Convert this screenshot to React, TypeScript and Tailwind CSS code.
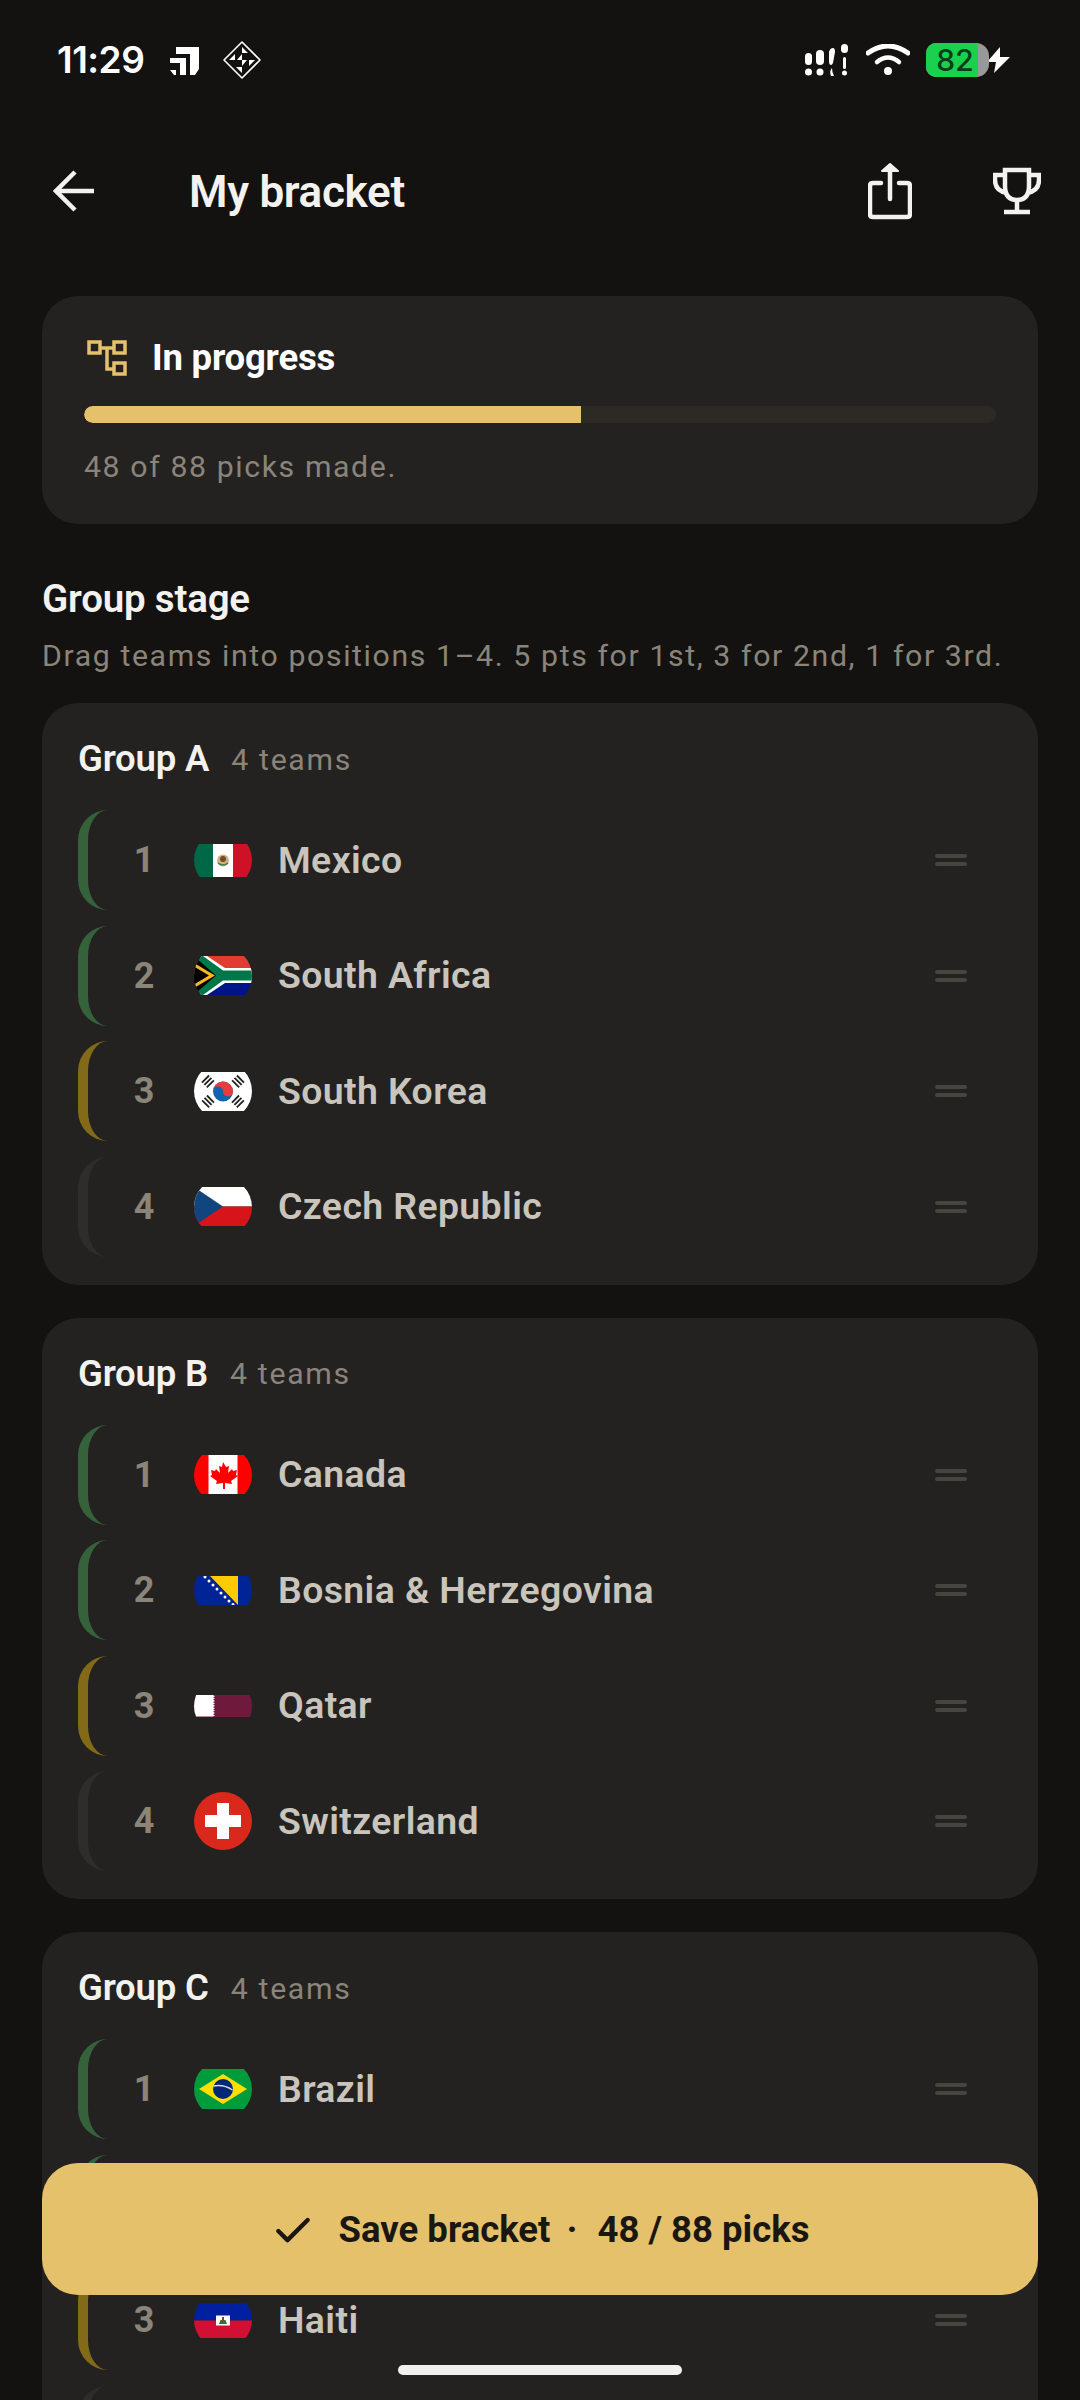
import React from 'react';
import { Check } from 'lucide-react';

type Team = { name: string; flag: React.ReactNode };
type Group = { letter: string; teams: Team[] };

// flags are drawn in a 58x58 box and cut by the round wrapper
const Band = ({ h, children }: { h: number; children: React.ReactNode }) => (
  <svg width="58" height={h} viewBox={`0 0 58 ${h}`} className="block">
    {children}
  </svg>
);

const Mexico = () => (
  <Band h={33}>
    <rect width="20" height="33" fill="#006847" />
    <rect x="19" width="20" height="33" fill="#ffffff" />
    <rect x="39" width="19" height="33" fill="#ce1126" />
    <circle cx="29" cy="16.5" r="6" fill="#c9b48a" />
    <circle cx="29" cy="15" r="3" fill="#7a4a21" />
    <path d="M24 19q5 4 10 0" stroke="#3f7f4e" strokeWidth="1.4" fill="none" />
  </Band>
);

const SouthAfrica = () => (
  <Band h={39}>
    <rect width="58" height="19.5" fill="#e03c31" />
    <rect y="19.5" width="58" height="19.5" fill="#001489" />
    <path d="M0 0L29 19.5L0 39Z" fill="#000" />
    <path d="M3 0H13L31 12H58V27H31L13 39H3L30 19.5Z" fill="#fff" />
    <path d="M3 0H9L29 14.5H58V24.5H29L9 39H3L2 37L22 19.5L2 2Z" fill="#007749" />
    <path d="M0 7L21 19.5L0 32V28.5L15 19.5L0 10.5Z" fill="#ffb81c" />
  </Band>
);

const Trigram = ({ x, y, r }: { x: number; y: number; r: number }) => (
  <g transform={`translate(${x} ${y}) rotate(${r})`} fill="#222">
    <rect x="-5" y="-4.4" width="10" height="1.8" />
    <rect x="-5" y="-1" width="10" height="1.8" />
    <rect x="-5" y="2.4" width="10" height="1.8" />
  </g>
);

const Korea = () => (
  <Band h={39}>
    <rect width="58" height="39" fill="#fff" />
    <Trigram x={14} y={9.5} r={-45} />
    <Trigram x={44} y={9.5} r={45} />
    <Trigram x={14} y={29.5} r={45} />
    <Trigram x={44} y={29.5} r={-45} />
    <circle cx="29" cy="19.5" r="10" fill="#0f64b0" />
    <path d="M19 19.5a10 10 0 0 1 20 0a5 5 0 0 1-10 0a5 5 0 0 0-10 0Z" fill="#e83b3b" />
  </Band>
);

const Czech = () => (
  <Band h={39}>
    <rect width="58" height="19.5" fill="#fff" />
    <rect y="19.5" width="58" height="19.5" fill="#d7141a" />
    <path d="M0 0L29 19.5L0 39Z" fill="#11457e" />
  </Band>
);

const Canada = () => (
  <Band h={39}>
    <rect width="58" height="39" fill="#ff0000" />
    <rect x="14.5" width="29" height="39" fill="#fff" />
    <path d="M29 7l3 5 3-1-1 7 4-4 1 2 4-1-1 5 2 1-7 5 1 3-7-1v6h-2v-6l-7 1 1-3-7-5 2-1-1-5 4 1 1-2 4 4-1-7 3 1Z" fill="#ff0000" />
  </Band>
);

const Bosnia = () => (
  <Band h={29}>
    <rect width="58" height="29" fill="#002395" />
    <path d="M16 0H44V29Z" fill="#fecb00" />
    <g fill="#fff">
      <circle cx="11" cy="1" r="1.5" />
      <circle cx="15" cy="5" r="1.5" />
      <circle cx="19" cy="9" r="1.5" />
      <circle cx="23" cy="13" r="1.5" />
      <circle cx="27" cy="17" r="1.5" />
      <circle cx="31" cy="21" r="1.5" />
      <circle cx="35" cy="25" r="1.5" />
      <circle cx="39" cy="28.5" r="1.5" />
    </g>
  </Band>
);

const Qatar = () => (
  <Band h={22}>
    <rect width="58" height="22" fill="#6f1a3d" />
    <path d="M0 0H19l2 1.2-2 1.2 2 1.2-2 1.2 2 1.2-2 1.2 2 1.2-2 1.2 2 1.2-2 1.2 2 1.2-2 1.2 2 1.2-2 1.2 2 1.2-2 1.2 2 1.2-2 1.2H0Z" fill="#fff" />
  </Band>
);

const Swiss = () => (
  <Band h={58}>
    <rect width="58" height="58" fill="#da291c" />
    <path d="M23 11H35V23H47V35H35V47H23V35H11V23H23Z" fill="#fff" />
  </Band>
);

const Brazil = () => (
  <Band h={40}>
    <rect width="58" height="40" fill="#009c3b" />
    <path d="M29 5L53 20L29 35L5 20Z" fill="#ffdf00" />
    <circle cx="29" cy="20" r="10" fill="#002776" />
    <path d="M19.5 17q10-2 19 4" stroke="#d8dde0" strokeWidth="1.4" fill="none" />
  </Band>
);

const Morocco = () => (
  <Band h={39}>
    <rect width="58" height="39" fill="#c1272d" />
  </Band>
);

const Haiti = () => (
  <Band h={35}>
    <rect width="58" height="17.5" fill="#00209f" />
    <rect y="17.5" width="58" height="17.5" fill="#d21034" />
    <rect x="22" y="12.5" width="14" height="10" fill="#fff" />
    <path d="M25 21h8l-1.500-4h-5Z" fill="#3f6b3a" />
    <rect x="28" y="14" width="2" height="4" fill="#7a4a21" />
  </Band>
);

const Scotland = () => (
  <Band h={35}>
    <rect width="58" height="35" fill="#005eb8" />
  </Band>
);

const groups: Group[] = [
  {
    letter: 'A',
    teams: [
      { name: 'Mexico', flag: <Mexico /> },
      { name: 'South Africa', flag: <SouthAfrica /> },
      { name: 'South Korea', flag: <Korea /> },
      { name: 'Czech Republic', flag: <Czech /> },
    ],
  },
  {
    letter: 'B',
    teams: [
      { name: 'Canada', flag: <Canada /> },
      { name: 'Bosnia & Herzegovina', flag: <Bosnia /> },
      { name: 'Qatar', flag: <Qatar /> },
      { name: 'Switzerland', flag: <Swiss /> },
    ],
  },
  {
    letter: 'C',
    teams: [
      { name: 'Brazil', flag: <Brazil /> },
      { name: 'Morocco', flag: <Morocco /> },
      { name: 'Haiti', flag: <Haiti /> },
      { name: 'Scotland', flag: <Scotland /> },
    ],
  },
];

const barColors = ['border-[#35623a]', 'border-[#35623a]', 'border-[#836a18]', 'border-[#2e2d2b]'];

const TeamRow = ({ team, pos }: { team: Team; pos: number }) => (
  <div className={`flex h-[100px] items-center rounded-[30px] border-l-[10px] ${barColors[pos]}`}>
    <span className="w-[106px] pl-[6px] text-center text-[36px] font-bold text-[#8b8479]">{pos + 1}</span>
    <span className="flex h-[58px] w-[58px] shrink-0 items-center justify-center overflow-hidden rounded-full">
      {team.flag}
    </span>
    <span className="ml-[26px] flex-1 text-[37.4px] font-semibold tracking-[0.4px] text-[#c9c5bd]">{team.name}</span>
    <span className="mr-[69px] flex flex-col gap-[4px]">
      <span className="h-[4px] w-[32px] rounded-full bg-[#47453f]" />
      <span className="h-[4px] w-[32px] rounded-full bg-[#47453f]" />
    </span>
  </div>
);

const GroupCard = ({ group }: { group: Group }) => (
  <section className="rounded-[36px] bg-[#232221] pb-[28px] pl-[36px] pr-[2px] pt-[33px]">
    <div className="mb-[27px] flex h-[47px] items-center">
      <h3 className="text-[36.5px] font-semibold tracking-[-0.2px] text-[#f3f2ee]">Group {group.letter}</h3>
      <span className="ml-[22px] text-[30.25px] tracking-[1.7px] text-[#8b8479]">4 teams</span>
    </div>
    <div className="flex flex-col gap-[15.5px]">
      {group.teams.map((t, i) => (
        <TeamRow key={t.name} team={t} pos={i} />
      ))}
    </div>
  </section>
);

const StatusBar = () => (
  <div className="flex h-[118px] items-center pl-[57px] pr-[69px] pt-[1px]">
    <span className="font-[family-name:Inter,sans-serif] text-[37px] font-semibold tracking-[-0.5px] text-white">11:29</span>
    <svg width="30" height="30" viewBox="0 0 30 30" className="ml-[26px]" fill="#fff">
      <path d="M6 2H29V24L25 30H20V9H6Z" />
      <path d="M0 13H16V30H10V18H0Z" />
      <path d="M0 25H6V30H4Z" />
    </svg>
    <svg width="38" height="38" viewBox="0 0 38 38" className="ml-[23px]" fill="none" stroke="#fff" strokeWidth="1.6">
      <path d="M19 1L37 19L19 37L1 19Z" strokeLinejoin="round" />
      <path d="M19 6L25 12H19ZM19 32L13 26H19ZM6 19L12 13V19ZM32 19L26 25V19ZM19 13L14 19H19ZM19 25L24 19H19Z" fill="#fff" stroke="none" />
    </svg>
    <div className="flex-1" />
    <svg width="44" height="32" viewBox="0 0 44 32" fill="#fff">
      <rect x="0" y="9" width="7" height="12" rx="3.5" />
      <circle cx="3.5" cy="28" r="3.5" />
      <rect x="11" y="6" width="8" height="15" rx="4" />
      <circle cx="15" cy="28" r="3.5" />
      <path d="M24 8q1-4 4-4q2 0 2 4l-2 11q-1 2-2 2q-2 0-2-4Z" />
      <path d="M27 24q-3 3-1 8h3q-2-4-2-8Z" />
      <rect x="36" y="0" width="7" height="9" rx="3.5" />
      <rect x="38" y="13" width="3" height="12" rx="1.5" />
      <circle cx="39.5" cy="29" r="2.5" />
    </svg>
    <svg width="44" height="32" viewBox="0 0 44 32" className="ml-[17px]" fill="none" stroke="#fff" strokeLinecap="round">
      <path d="M2 9Q22-5 42 9" strokeWidth="5" />
      <path d="M11 18Q22 9 33 18" strokeWidth="4.500" />
      <circle cx="22" cy="27" r="4" fill="#fff" stroke="none" />
    </svg>
    <div className="relative ml-[16px] h-[34px] w-[63px] overflow-hidden rounded-l-[10px] rounded-r-[13px] bg-[#999999]">
      <div className="flex h-full w-[52px] items-center justify-center bg-[#19d14d] pl-[6px] font-[family-name:Inter,sans-serif] text-[30px] font-medium leading-none text-[#0a3d1c]">
        82
      </div>
    </div>
    <svg width="24" height="26" viewBox="0 0 24 26" className="-ml-[2px]" fill="#fff">
      <path d="M13 0L0 15H9L7 26L23 10H13Z" />
    </svg>
  </div>
);

const Header = () => (
  <div className="flex h-[146px] items-center pl-[53px] pr-[39px]">
    <svg width="42" height="42" viewBox="0 0 42 42" fill="none" stroke="#f3f2ee" strokeWidth="4.5">
      <path d="M41 21H3M22 2L3 21L22 40" />
    </svg>
    <h1 className="ml-[94px] flex-1 pt-[2px] text-[44px] font-semibold tracking-[-0.3px] text-[#f3f2ee]">My bracket</h1>
    <svg width="44" height="58" viewBox="0 0 44 58" fill="none" stroke="#f3f2ee" strokeWidth="4.5" strokeLinejoin="round" strokeLinecap="round">
      <path d="M13 21H5Q2 21 2 24V52Q2 55 5 55H39Q42 55 42 52V24Q42 21 39 21H31" />
      <path d="M22 37V4" />
      <path d="M14 9L22 2L30 9Z" fill="#f3f2ee" strokeWidth="2" />
    </svg>
    <svg width="48" height="48" viewBox="0 0 48 48" fill="none" stroke="#f3f2ee" strokeWidth="4.5" className="ml-[81px]">
      <path d="M12 3H36V19Q36 33 24 33Q12 33 12 19Z" />
      <path d="M12 8H2V13Q2 24 14 26M36 8H46V13Q46 24 34 26" />
      <path d="M24 33V45M11 45H37" />
    </svg>
  </div>
);

const ProgressCard = () => (
  <section className="mx-[42px] mt-[32px] h-[228px] rounded-[36px] bg-[#232221] px-[42px] pt-[41px]">
    <div className="flex h-[42px] items-center">
      <svg width="40" height="36" viewBox="0 0 40 36" fill="none" stroke="#e5c16b" strokeWidth="3.5" className="ml-[3px]">
        <rect x="2" y="2" width="11" height="11" />
        <rect x="27" y="2" width="11" height="11" />
        <rect x="27" y="23" width="11" height="11" />
        <path d="M13 8H27M20 8V29H27" />
      </svg>
      <span className="ml-[25px] text-[36.5px] font-bold tracking-[-0.2px] text-white">In progress</span>
    </div>
    <div className="mt-[27px] h-[17px] overflow-hidden rounded-full bg-[#2d2a26]">
      <div className="h-full w-[54.5%] rounded-l-full bg-[#e5c16b]" />
    </div>
    <p className="mt-[26px] text-[30.25px] leading-[36px] tracking-[1.6px] text-[#8b8479]">48 of 88 picks made.</p>
  </section>
);

export default function App() {
  return (
    <div className="relative h-[2400px] w-[1080px] overflow-hidden bg-[#131211] font-[family-name:Roboto,sans-serif]">
      <StatusBar />
      <Header />
      <ProgressCard />
      <div className="mx-[42px] mt-[52px]">
        <h2 className="text-[38.5px] font-semibold leading-[46px] tracking-[-0.2px] text-[#f3f2ee]">Group stage</h2>
        <p className="mt-[16px] whitespace-nowrap text-[30.25px] leading-[36px] tracking-[1.6px] text-[#8b8479]">
          Drag teams into positions 1–4. 5 pts for 1st, 3 for 2nd, 1 for 3rd.
        </p>
        <div className="mt-[29px] flex flex-col gap-[33px]">
          {groups.map((g) => (
            <GroupCard key={g.letter} group={g} />
          ))}
        </div>
      </div>

      <button className="absolute bottom-[105px] left-[42px] flex h-[132px] w-[996px] items-center justify-center rounded-[36px] bg-[#e5c16b] pt-[3px] text-[36.5px] font-bold text-[#1a1712]">
        <Check size={44} strokeWidth={2.4} className="mr-[24px]" />
        <span>Save bracket</span>
        <span className="ml-[16px] mr-[20px]">·</span>
        <span>48 / 88 picks</span>
      </button>
      <div className="absolute bottom-[25px] left-[398px] h-[10px] w-[284px] rounded-full bg-[#f0f0ee]" />
    </div>
  );
}
